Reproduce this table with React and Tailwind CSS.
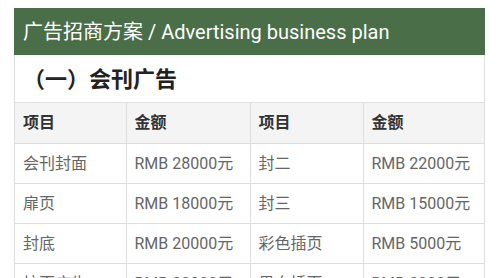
const rows = [
  ['会刊封面', 'RMB 28000元', '封二', 'RMB 22000元'],
  ['扉页', 'RMB 18000元', '封三', 'RMB 15000元'],
  ['封底', 'RMB 20000元', '彩色插页', 'RMB 5000元'],
  ['拉页广告', 'RMB 30000元', '黑白插页', 'RMB 3000元'],
];

export default function App() {
  return (
    <div className="w-[500px] h-[278px] overflow-hidden bg-white pt-2 pl-[14px] pr-[15px] font-['Roboto','Noto_Sans_CJK_SC',sans-serif]">
      <div className="border-x border-[#dedede]">
        <div className="h-[47px] bg-[#4a6e48] px-[9px] flex items-center text-white text-[20px] leading-none -mx-px">
          广告招商方案 / Advertising business plan
        </div>
        <h2 className="h-[47px] flex items-center pl-2 pt-px text-[22px] font-bold text-[#222]">
          （一）会刊广告
        </h2>
        <table className="w-full table-fixed border-collapse text-[16px] leading-[20px]">
          <colgroup>
            <col className="w-[111px]" />
            <col className="w-[124px]" />
            <col className="w-[113px]" />
            <col />
          </colgroup>
          <thead>
            <tr className="bg-[#f4f4f4] h-[41px]">
              {['项目', '金额', '项目', '金额'].map((h, i) => (
                <th key={i} className="border-y border-x border-[#dedede] first:border-l-0 last:border-r-0 px-2 text-left font-bold text-[#333]">
                  {h}
                </th>
              ))}
            </tr>
          </thead>
          <tbody>
            {rows.map((r, i) => (
              <tr key={i} className="h-10">
                {r.map((c, j) => (
                  <td key={j} className="border border-[#dedede] first:border-l-0 last:border-r-0 px-2 text-[#666] whitespace-nowrap">
                    {c}
                  </td>
                ))}
              </tr>
            ))}
          </tbody>
        </table>
      </div>
    </div>
  );
}
